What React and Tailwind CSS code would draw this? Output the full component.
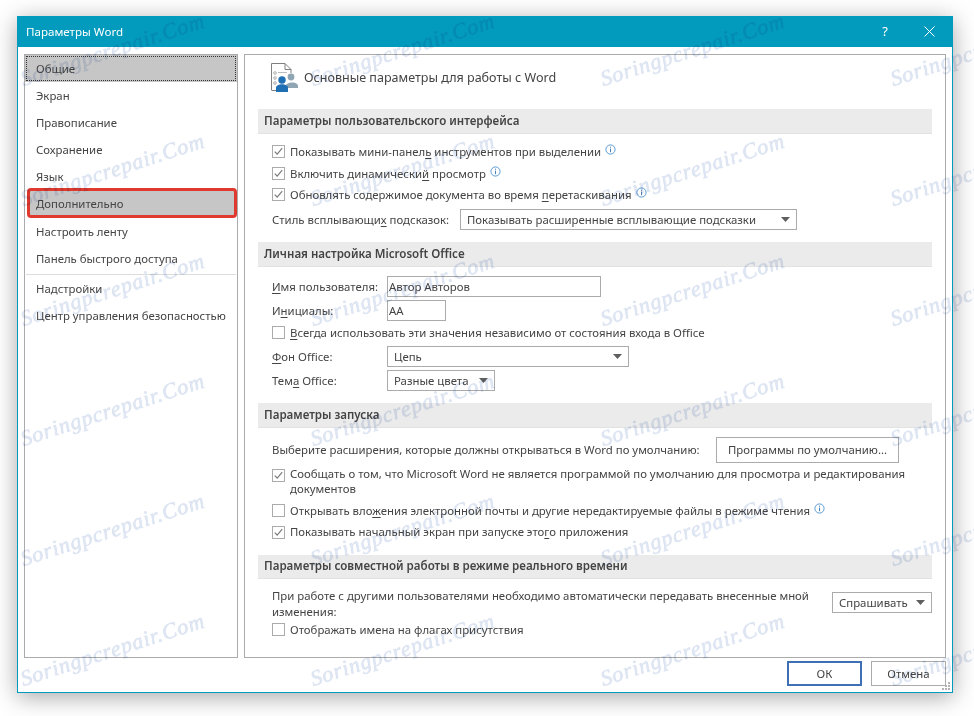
import React from "react";

const Info = () => (
  <svg width="11" height="11" viewBox="0 0 11 11" className="inline-block ml-[4px] align-[1px]">
    <circle cx="5.5" cy="5.5" r="4.6" fill="none" stroke="#5b9bd5" strokeWidth="1" />
    <rect x="5" y="4.6" width="1" height="3.6" fill="#4a7fb5" />
    <rect x="5" y="2.7" width="1" height="1" fill="#4a7fb5" />
  </svg>
);

const Check = ({ checked }) => (
  <span className="w-[13px] h-[13px] border border-[#ababab] bg-white flex items-center justify-center shrink-0">
    {checked && (
      <svg width="11" height="11" viewBox="0 0 11 11">
        <path d="M1.8 5.6 L4.2 8.2 L9.2 2.2" fill="none" stroke="#7a7a7a" strokeWidth="1.2" />
      </svg>
    )}
  </span>
);

const Arrow = () => (
  <svg width="9" height="5" viewBox="0 0 9 5" className="shrink-0">
    <path d="M0 0 H9 L4.5 5 Z" fill="#5f5f5f" />
  </svg>
);

const U = ({ children }) => <span className="underline underline-offset-2">{children}</span>;

const Section = ({ children, h = "h-[25px]" }) => (
  <div className={`mx-[13px] ${h} bg-[#ebebeb] border-b border-[#e2e2e2] flex items-center pl-[6px] font-semibold text-[11.55px] text-[#444] whitespace-nowrap`}>
    {children}
  </div>
);

const CheckRow = ({ checked, children, h = "h-[21.5px]" }) => (
  <div className={`flex items-center ${h} pl-[27px]`}>
    <Check checked={checked} />
    <span className="ml-[5px] whitespace-nowrap">{children}</span>
  </div>
);

const Select = ({ w, extra = "", children }) => (
  <div className={`${w} ${extra} h-[21px] border border-[#ababab] bg-white flex items-center justify-between pl-[6px] pr-[6px] shrink-0`}>
    <span className="whitespace-nowrap">{children}</span>
    <Arrow />
  </div>
);

const Label = ({ w = "w-[115px]", children }) => <span className={`${w} shrink-0 whitespace-nowrap`}>{children}</span>;

const NavItem = ({ children, shift }) => (
  <div className={`h-[27px] flex items-center pl-[11px] whitespace-nowrap ${shift ? "pt-[1px]" : ""}`}>{children}</div>
);

const Nav = () => (
  <div className="w-[214px] border border-[#ababab] bg-white shrink-0">
    <div className="h-[27px] bg-[#c6c6c6] p-[1px]">
      <div className="h-full border border-dotted border-[#333] flex items-center pl-[9px]">Общие</div>
    </div>
    {["Экран", "Правописание", "Сохранение", "Язык"].map((t) => (
      <NavItem key={t} shift>{t}</NavItem>
    ))}
    <div className="h-[30px] -mt-[2px] ml-[2px] bg-[#c6c6c6] border-[3px] border-[#e0392e] rounded-[4px] flex items-center pl-[6px] pt-[1px] relative">Дополнительно</div>
    <NavItem shift>Настроить ленту</NavItem>
    <NavItem shift>Панель быстрого доступа</NavItem>
    <div className="h-px bg-[#dcdcdc] mt-[2px] mx-[1px]" />
    <NavItem>Надстройки</NavItem>
    <NavItem>Центр управления безопасностью</NavItem>
  </div>
);

const HeaderIcon = () => (
  <svg width="32" height="32" viewBox="0 0 32 32" className="shrink-0">
    <path d="M0.5 29 V2.5 H14 L20 8.5 V12 M14 2.5 V8.5 H20 M0.5 29.5 H5" fill="none" stroke="#7f7f7f" strokeWidth="1" />
    <rect x="7" y="11" width="9" height="1" fill="#bcbcbc" />
    <circle cx="4" cy="12" r="1.3" fill="none" stroke="#9a9a9a" strokeWidth="0.8" />
    <circle cx="4" cy="17" r="1.3" fill="none" stroke="#9a9a9a" strokeWidth="0.8" />
    <circle cx="4" cy="22" r="1.3" fill="none" stroke="#9a9a9a" strokeWidth="0.8" />
    <circle cx="20" cy="16" r="3.4" fill="#8fa5b3" />
    <path d="M14 27 C14 20 27 20 27 25 V27 Z" fill="#8fa5b3" />
    <circle cx="11" cy="19" r="3.7" fill="#1f6fb5" />
    <path d="M5 31 V27 C5 22 17 22 17 27 V31 Z" fill="#1f6fb5" />
  </svg>
);

const Main = () => (
  <div className="flex-1 border border-[#ababab] bg-white min-w-0">
    <div className="h-[54px] flex items-start pl-[26px] pt-[6px]">
      <HeaderIcon />
      <span className="ml-[1px] mt-[9px] text-[12.55px] leading-[16px] whitespace-nowrap">Основные параметры для работы с Word</span>
    </div>
    <Section>Параметры пользовательского интерфейса</Section>
    <div className="h-[7px]" />
    <CheckRow checked>Показывать мини-панел<U>ь</U> инструментов при выделении<Info /></CheckRow>
    <CheckRow checked>Включить динамически<U>й</U> просмотр<Info /></CheckRow>
    <CheckRow checked>Обновлять содержимое документа во время <U>п</U>еретаскивания<Info /></CheckRow>
    <div className="flex items-center h-[28px] pl-[27px]">
      <Label w="w-[188px]">Стиль всплывающи<U>х</U> подсказок:</Label>
      <Select w="w-[337px]">Показывать расширенные всплывающие подсказки</Select>
    </div>
    <div className="h-[8px]" />
    <Section>Личная настройка Microsoft Office</Section>
    <div className="h-[9px]" />
    <div className="flex items-center h-[22px] pl-[27px]">
      <Label><U>И</U>мя пользователя:</Label>
      <div className="w-[214px] h-[21px] border border-[#ababab] pl-[1px] flex items-center">Автор Авторов</div>
    </div>
    <div className="flex items-center h-[24px] mt-[1px] pl-[27px]">
      <Label>И<U>н</U>ициалы:</Label>
      <div className="w-[59px] h-[21px] border border-[#ababab] pl-[1px] flex items-center">АА</div>
    </div>
    <CheckRow h="h-[20px]"><U>В</U>сегда использовать эти значения независимо от состояния входа в Office</CheckRow>
    <div className="flex items-center h-[24px] mt-[2px] pl-[27px]">
      <Label><U>Ф</U>он Office:</Label>
      <Select w="w-[242px]">Цепь</Select>
    </div>
    <div className="flex items-center h-[24px] pl-[27px]">
      <Label>Тем<U>а</U> Office:</Label>
      <Select w="w-[108px]">Разные цвета</Select>
    </div>
    <div className="h-[10px]" />
    <Section>Параметры запуска</Section>
    <div className="h-[9px]" />
    <div className="flex items-center h-[27px] pl-[27px]">
      <span className="w-[444px] shrink-0 whitespace-nowrap">Выберите расширения, которые должны открываться в Word по умолчанию:</span>
      <div className="w-[183px] h-[26px] border border-[#ababab] flex items-center justify-center whitespace-nowrap">Программы по умолчанию...</div>
    </div>
    <div className="flex items-start pl-[27px] mt-[2px] h-[34px]">
      <span className="mt-[3px]"><Check checked /></span>
      <span className="ml-[5px] leading-[15.5px] w-[630px]">Сообщать о том, что Microsoft Word не является программой по умолчанию для просмотра и редактирования документов</span>
    </div>
    <CheckRow h="h-[22px]">Открывать вло<U>ж</U>ения электронной почты и другие нередактируемые файлы в режиме чтения<Info /></CheckRow>
    <CheckRow checked h="h-[21px]">Показывать начальный экран при запуске это<U>г</U>о приложения</CheckRow>
    <div className="h-[12px]" />
    <Section h="h-[24px]">Параметры совместной работы в режиме реального времени</Section>
    <div className="h-[10px]" />
    <div className="flex items-center pl-[27px] h-[30px]">
      <span className="w-[560px] shrink-0 leading-[16px]">При работе с другими пользователями необходимо автоматически передавать внесенные мной изменения:</span>
      <Select w="w-[100px]" extra="-mt-[2px]">Спрашивать</Select>
    </div>
    <CheckRow h="h-[22px]">Отображать имена на флагах присутствия</CheckRow>
  </div>
);

const rows = [30, 150, 270, 390, 510, 630];
const cols = [25, 315, 605, 895];

const Watermarks = () => (
  <div className="absolute inset-0 overflow-hidden pointer-events-none mix-blend-multiply">
    {cols.map((x) =>
      rows.map((y) => (
        <span
          key={`${x}-${y}`}
          className="absolute whitespace-nowrap italic text-[22px] leading-[26px] text-[#dfe6f3] tracking-[0.8px] origin-bottom-left -rotate-[18deg] [text-shadow:0_0_1px_#c5d0e6]"
          style={{ left: x, top: y + 36, fontFamily: '"Liberation Serif", serif' }}
        >
          Soringpcrepair.Com
        </span>
      ))
    )}
  </div>
);

const Grip = () => (
  <svg width="9" height="9" viewBox="0 0 9 9" className="absolute right-[1px] bottom-[1px]">
    <g fill="#b5b5b5">
      <rect x="6" y="0" width="2" height="2" />
      <rect x="3" y="3" width="2" height="2" />
      <rect x="6" y="3" width="2" height="2" />
      <rect x="0" y="6" width="2" height="2" />
      <rect x="3" y="6" width="2" height="2" />
      <rect x="6" y="6" width="2" height="2" />
    </g>
  </svg>
);

export default function App() {
  return (
    <div className="relative w-[974px] h-[716px] bg-white overflow-hidden text-[#444] text-[11.38px] pl-[17px] pt-[16px]" style={{ fontFamily: '"Noto Sans", sans-serif' }}>
      <div className="relative w-[936px] h-[677px] bg-white border border-[#039bbd] border-t-0 flex flex-col shadow-[0_4px_22px_rgba(0,0,0,0.35)]">
        <div className="h-[31px] -mx-px bg-[#039bbd] text-white flex items-center justify-between pl-[9px] pr-[18px] shrink-0">
          <span className="text-[11.6px]">Параметры Word</span>
          <div className="flex items-center">
            <span className="text-[13px] leading-none mr-[36px]">?</span>
            <svg width="11" height="11" viewBox="0 0 11 11"><path d="M.5.5 L10.5 10.5 M10.5.5 L.5 10.5" stroke="#fff" strokeWidth="1" /></svg>
          </div>
        </div>
        <div className="flex gap-[6px] h-[604px] mt-[7px] px-[6px] shrink-0">
          <Nav />
          <Main />
        </div>
        <div className="flex justify-end gap-[9px] pr-[6px] mt-[3px]">
          <div className="w-[75px] h-[25px] border-2 border-[#3f6fb5] flex items-center justify-center">ОК</div>
          <div className="w-[75px] h-[25px] border border-[#ababab] flex items-center justify-center">Отмена</div>
        </div>
        <Grip />
      </div>
      <Watermarks />
    </div>
  );
}
